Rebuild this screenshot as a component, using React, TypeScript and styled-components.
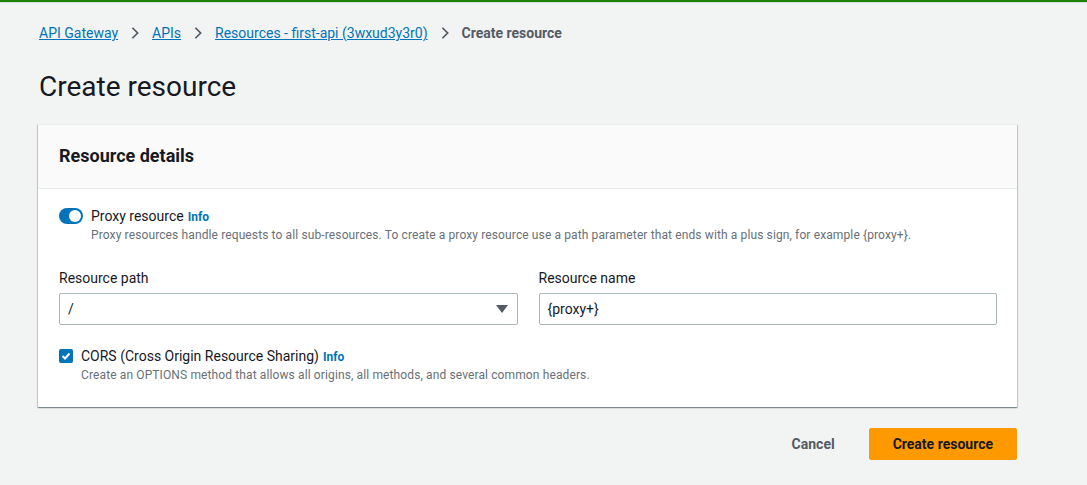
import React, { useState } from 'react';
import styled, { createGlobalStyle } from 'styled-components';

const GlobalStyle = createGlobalStyle`
  html, body {
    margin: 0;
    padding: 0;
    background: #f2f3f3;
    font-family: Roboto, "Noto Sans", Arial, sans-serif;
    color: #16191f;
  }
  * { box-sizing: border-box; }
`;

const TopBar = styled.div`
  height: 3px;
  background: #1d8102;
  border-bottom: 1px solid #d5dbdb;
`;

const Page = styled.div`
  padding: 18px 70px 20px 38px;
`;

const Breadcrumbs = styled.nav`
  display: flex;
  align-items: center;
  gap: 10px;
  font-size: 14px;
  height: 24px;
  padding-left: 1px;
`;

const Crumb = styled.a`
  color: #0073bb;
  text-decoration: underline;
  cursor: pointer;
`;

const CurrentCrumb = styled.span`
  color: #545b64;
  font-weight: 700;
`;

const Chevron = styled.svg`
  width: 14px;
  height: 14px;
  color: #545b64;
`;

const Title = styled.h1`
  font-size: 28px;
  font-weight: 400;
  margin: 25px 0 20px 1px;
  line-height: 34px;
  color: #16191f;
`;

const Card = styled.section`
  background: #fff;
  border-top: 1px solid #eaeded;
  box-shadow: 0 1px 1px 0 rgba(0, 28, 36, 0.3), 1px 1px 1px 0 rgba(0, 28, 36, 0.15),
    -1px 1px 1px 0 rgba(0, 28, 36, 0.15);
`;

const CardHeader = styled.header`
  background: #fafafa;
  border-bottom: 1px solid #eaeded;
  height: 64px;
  padding: 0 21px;
  display: flex;
  align-items: center;
`;

const CardTitle = styled.h2`
  margin: 0;
  font-size: 18px;
  font-weight: 700;
  padding-bottom: 2px;
`;

const CardBody = styled.div`
  padding: 17px 20px 24px 21px;
  display: flex;
  flex-direction: column;
`;

const OptionRow = styled.div`
  display: flex;
  gap: 8px;
`;

const OptionText = styled.div`
  display: flex;
  flex-direction: column;
`;

const OptionLabel = styled.div`
  font-size: 14px;
  line-height: 20px;
`;

const Info = styled.a`
  color: #0073bb;
  font-size: 12px;
  font-weight: 700;
  margin-left: 4px;
`;

const Hint = styled.div`
  font-size: 12px;
  color: #687078;
  line-height: 16px;
  letter-spacing: 0.12px;
`;

const Toggle = styled.span<{ on: boolean }>`
  flex: none;
  position: relative;
  width: 24px;
  height: 16px;
  margin-top: 2px;
  border-radius: 8px;
  background: ${(p) => (p.on ? '#0073bb' : '#aab7b8')};
  &::after {
    content: '';
    position: absolute;
    top: 2px;
    left: ${(p) => (p.on ? '10px' : '2px')};
    width: 12px;
    height: 12px;
    border-radius: 50%;
    background: #fff;
  }
`;

const Checkbox = styled.span`
  flex: none;
  width: 14px;
  height: 14px;
  margin-top: 3px;
  border-radius: 2px;
  background: #0073bb;
  display: flex;
  align-items: center;
  justify-content: center;
`;

const Fields = styled.div`
  display: grid;
  grid-template-columns: 1fr 1fr;
  gap: 21px;
  margin: 25px 0 21px;
`;

const Field = styled.div`
  display: flex;
  flex-direction: column;
  gap: 5px;
`;

const FieldLabel = styled.label`
  font-size: 14px;
  line-height: 20px;
`;

const InputBox = styled.div`
  height: 32px;
  border: 1px solid #aab7b8;
  border-radius: 2px;
  padding: 0 8px;
  display: flex;
  align-items: center;
  justify-content: space-between;
  font-size: 14px;
  background: #fff;
`;

const Caret = styled.span`
  width: 0;
  height: 0;
  border-left: 6px solid transparent;
  border-right: 6px solid transparent;
  border-top: 8px solid #545b64;
  margin-right: 1px;
`;

const Actions = styled.div`
  display: flex;
  justify-content: flex-end;
  align-items: center;
  gap: 13px;
  margin-top: 21px;
`;

const Button = styled.button<{ primary?: boolean }>`
  font-family: inherit;
  font-size: 14px;
  font-weight: 700;
  height: 32px;
  border-radius: 2px;
  border: 1px solid ${(p) => (p.primary ? '#ff9900' : 'transparent')};
  background: ${(p) => (p.primary ? '#ff9900' : 'transparent')};
  color: ${(p) => (p.primary ? '#16191f' : '#545b64')};
  padding: 0 ${(p) => (p.primary ? '23px' : '20px')};
  cursor: pointer;
`;

const ChevronIcon = () => (
  <Chevron viewBox="0 0 16 16" fill="none">
    <path d="M5 2l6 6-6 6" stroke="currentColor" strokeWidth="2" />
  </Chevron>
);

export default function App() {
  const [proxy] = useState(true);
  return (
    <>
      <GlobalStyle />
      <TopBar />
      <Page>
        <Breadcrumbs>
          <Crumb>API Gateway</Crumb>
          <ChevronIcon />
          <Crumb>APIs</Crumb>
          <ChevronIcon />
          <Crumb>Resources - first-api (3wxud3y3r0)</Crumb>
          <ChevronIcon />
          <CurrentCrumb>Create resource</CurrentCrumb>
        </Breadcrumbs>
        <Title>Create resource</Title>
        <Card>
          <CardHeader>
            <CardTitle>Resource details</CardTitle>
          </CardHeader>
          <CardBody>
            <OptionRow>
              <Toggle on={proxy} />
              <OptionText>
                <OptionLabel>
                  Proxy resource<Info>Info</Info>
                </OptionLabel>
                <Hint>
                  Proxy resources handle requests to all sub-resources. To create a proxy resource use a path
                  parameter that ends with a plus sign, for example {'{proxy+}'}.
                </Hint>
              </OptionText>
            </OptionRow>
            <Fields>
              <Field>
                <FieldLabel>Resource path</FieldLabel>
                <InputBox>
                  <span>/</span>
                  <Caret />
                </InputBox>
              </Field>
              <Field>
                <FieldLabel>Resource name</FieldLabel>
                <InputBox>{'{proxy+}'}</InputBox>
              </Field>
            </Fields>
            <OptionRow>
              <Checkbox>
                <svg width="10" height="10" viewBox="0 0 10 10" fill="none">
                  <path d="M1.5 5l2.5 2.5 4.5-5" stroke="#fff" strokeWidth="2" />
                </svg>
              </Checkbox>
              <OptionText>
                <OptionLabel>
                  CORS (Cross Origin Resource Sharing)<Info>Info</Info>
                </OptionLabel>
                <Hint>Create an OPTIONS method that allows all origins, all methods, and several common headers.</Hint>
              </OptionText>
            </OptionRow>
          </CardBody>
        </Card>
        <Actions>
          <Button>Cancel</Button>
          <Button primary>Create resource</Button>
        </Actions>
      </Page>
    </>
  );
}
